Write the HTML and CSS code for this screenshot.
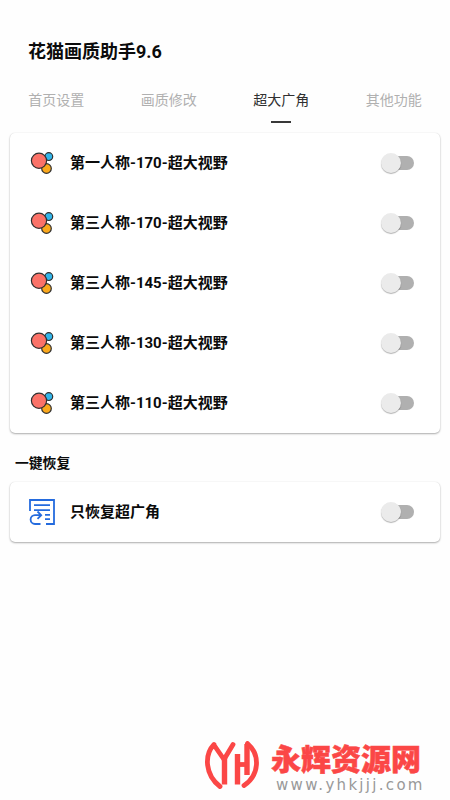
FILE: index.html
```html
<!DOCTYPE html>
<html lang="zh-CN">
<head>
<meta charset="utf-8">
<title>花猫画质助手9.6</title>
<link rel="stylesheet" href="styles.css">
</head>
<body>
<svg class="defs" aria-hidden="true">
  <symbol id="dots" viewBox="0 0 24 24">
    <g stroke="#303030" stroke-width="1.2">
      <circle cx="18.800" cy="5.600" r="3.900" fill="#32b5e9"/>
      <circle cx="16.500" cy="17.500" r="4.800" fill="#fba81c"/>
      <circle cx="9" cy="9.800" r="7.600" fill="#fb7268"/>
    </g>
  </symbol>
</svg>
<main class="app">
  <h1 class="title">花猫画质助手9.6</h1>
  <nav class="tabs">
    <a class="tab">首页设置</a>
    <a class="tab">画质修改</a>
    <a class="tab active">超大广角</a>
    <a class="tab">其他功能</a>
  </nav>
  <section class="card">
    <div class="row"><svg class="icon"><use href="#dots"/></svg><span class="label">第一人称-170-超大视野</span><span class="switch"></span></div>
    <div class="row"><svg class="icon"><use href="#dots"/></svg><span class="label">第三人称-170-超大视野</span><span class="switch"></span></div>
    <div class="row"><svg class="icon"><use href="#dots"/></svg><span class="label">第三人称-145-超大视野</span><span class="switch"></span></div>
    <div class="row"><svg class="icon"><use href="#dots"/></svg><span class="label">第三人称-130-超大视野</span><span class="switch"></span></div>
    <div class="row"><svg class="icon"><use href="#dots"/></svg><span class="label">第三人称-110-超大视野</span><span class="switch"></span></div>
  </section>
  <h2 class="subtitle">一键恢复</h2>
  <section class="card">
    <div class="row">
      <svg class="icon restore" viewBox="0 0 26 26" fill="none" stroke="#246bde" stroke-width="1.800">
        <path d="M1 12V1h24v24h-8M5 6.200h16M5 11.200h16M16 15.800h5M16 20.200h5M11.500 25H6a4.400 4.400 0 0 1 0-8.800h6M8.500 12.500l3.700 3.700-3.700 3.700"/>
      </svg>
      <span class="label">只恢复超广角</span><span class="switch"></span>
    </div>
  </section>
  <footer class="brand">
    <svg class="logo" viewBox="0 0 54 50" fill="none" stroke="#fb4746" stroke-width="4.800">
      <path stroke-linecap="round" stroke-linejoin="round" d="M9 3.500C-1 14 0 34 15 45.500M9 4L19 18.500 28 3.500M42.500 2.500C55.500 14 54.500 34 39 44.500"/>
      <path stroke-width="5.400" d="M19.500 17v26.500M32.500 13v30.500M42 3v31"/>
      <path d="M33 23.500h9"/>
    </svg>
    <div class="words"><div class="name">永辉资源网</div><div class="url">www.yhkjjj.com</div></div>
  </footer>
</main>
</body>
</html>
```
FILE: styles.css
```css
* { box-sizing: border-box; }
body { margin: 0; background: #fefefe; color: #0b0b0b; font-family: Roboto, "Noto Sans CJK SC", sans-serif; }
.defs { position: absolute; width: 0; height: 0; }
.app { height: 800px; display: flex; flex-direction: column; overflow: hidden; }
.title { margin: 38px 0 0 28px; font-size: 18px; line-height: 28px; font-weight: 700; }
.tabs { display: grid; grid-template-columns: repeat(4, 1fr); height: 58px; margin-top: 9px; }
.tab { display: flex; flex-direction: column; align-items: center; padding-top: 14px; font-size: 14px; line-height: 22px; color: #b0b0b0; }
.active { color: #303030; }
.active::after { content: ""; width: 20px; height: 2px; margin-top: 10px; background: #383838; }
.card { margin: 0 10px; border-radius: 5px; background: #fff; box-shadow: 0 1px 2px rgba(0,0,0,.32), 0 0 1px rgba(0,0,0,.12); }
.row { display: flex; align-items: center; height: 60px; padding: 0 26px 0 20px; }
.icon { width: 24px; height: 24px; margin-right: 16px; }
.restore { width: 26px; height: 26px; margin: 0 15px 0 -1px; }
.label { flex: 1; font-size: 15px; line-height: 22px; font-weight: 700; }
.switch { position: relative; width: 28px; height: 14px; border-radius: 7px; background: #b0b0b0; }
.switch::before { content: ""; position: absolute; left: -5px; top: -3px; width: 20px; height: 20px; border-radius: 50%; background: #ebebeb; box-shadow: 0 1px 1px rgba(0,0,0,.3); }
.subtitle { margin: 19px 0 8px 15px; font-size: 13.8px; line-height: 22px; font-weight: 700; }
.brand { display: flex; margin: auto 0 8px 205px; gap: 12px; }
.logo { width: 54px; height: 50px; margin-top: 1px; }
.words { display: flex; flex-direction: column; }
.name { margin-top: 2px; font-size: 30px; line-height: 36px; font-weight: 900; color: #fb4746; -webkit-text-stroke: .5px #fb4746; }
.url { padding-left: 5px; font: 15px/14px "DejaVu Sans", sans-serif; letter-spacing: 2.3px; color: #999; }
```
